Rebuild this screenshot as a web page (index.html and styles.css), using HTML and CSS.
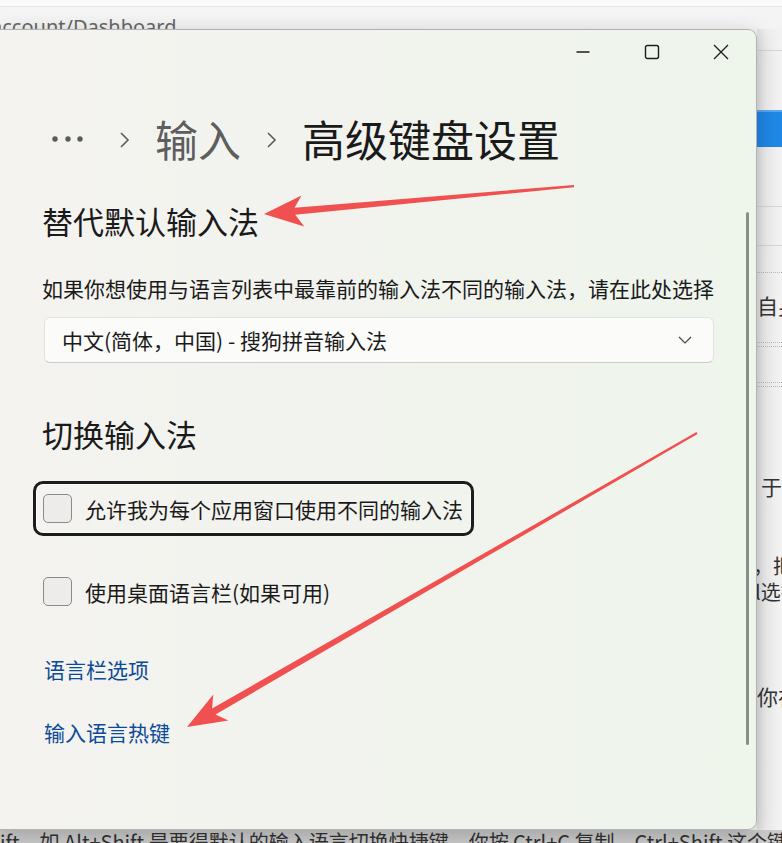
FILE: index.html
```html
<!DOCTYPE html>
<html lang="zh-CN">
<head>
<meta charset="utf-8">
<title>高级键盘设置</title>
<link rel="stylesheet" href="styles.css">
</head>
<body>
<div class="page">
  <div class="topstrip"><span class="addr">account/Dashboard</span></div>
  <div class="site">
    <div class="site-main"></div>
    <div class="site-side">
      <div class="rule r1"></div>
      <div class="bluebar"></div>
      <div class="rule r2"></div>
      <div class="rule r3"></div>
      <div class="dotrule d1"></div>
      <p class="stext t1">自身</p>
      <div class="dotrule d2"></div>
      <div class="dotrule d3"></div>
      <p class="stext t2">于是</p>
      <p class="stext t3">，把</p>
      <p class="stext t4">l选择</p>
      <p class="stext t5">你在</p>
    </div>
  </div>
  <p class="footline">Shift，如 Alt+Shift 是要得默认的输入语言切换快捷键，你按 Ctrl+C 复制，Ctrl+Shift 这个键涉及</p>
</div>

<div class="window">
  <div class="titlebar">
    <div class="capbtn">
      <svg width="16" height="16" viewBox="0 0 16 16"><line x1="1.5" y1="8" x2="14.5" y2="8" stroke="#1c1c1c" stroke-width="1.4"/></svg>
    </div>
    <div class="capbtn">
      <svg width="16" height="16" viewBox="0 0 16 16"><rect x="1.5" y="1.5" width="13" height="13" rx="2" fill="none" stroke="#1c1c1c" stroke-width="1.4"/></svg>
    </div>
    <div class="capbtn">
      <svg width="16" height="16" viewBox="0 0 16 16"><path d="M1 1 L15 15 M15 1 L1 15" stroke="#1c1c1c" stroke-width="1.3" fill="none"/></svg>
    </div>
  </div>

  <div class="content">
    <nav class="breadcrumb">
      <svg class="bc-dots" width="36" height="8" viewBox="0 0 36 8"><circle cx="5" cy="4" r="2.7" fill="#5b5b5b"/><circle cx="18" cy="4" r="2.7" fill="#5b5b5b"/><circle cx="30" cy="4" r="2.7" fill="#5b5b5b"/></svg>
      <svg class="bc-chev first" width="12" height="16" viewBox="0 0 12 16"><polyline points="3,1 10,8 3,15" fill="none" stroke="#5b5b5b" stroke-width="1.6"/></svg>
      <span class="bc-item">输入</span>
      <svg class="bc-chev" width="12" height="16" viewBox="0 0 12 16"><polyline points="3,1 10,8 3,15" fill="none" stroke="#5b5b5b" stroke-width="1.6"/></svg>
      <span class="bc-current">高级键盘设置</span>
    </nav>

    <h2 class="section-title first">替代默认输入法</h2>
    <p class="desc">如果你想使用与语言列表中最靠前的输入法不同的输入法，请在此处选择</p>
    <div class="select">
      <span class="select-text">中文(简体，中国) - 搜狗拼音输入法</span>
      <svg width="14" height="8" viewBox="0 0 14 8"><polyline points="1,1 7,7 13,1" fill="none" stroke="#444" stroke-width="1.2"/></svg>
    </div>

    <h2 class="section-title second">切换输入法</h2>
    <div class="check focused">
      <span class="box"></span>
      <span class="check-label">允许我为每个应用窗口使用不同的输入法</span>
    </div>
    <div class="check second">
      <span class="box"></span>
      <span class="check-label">使用桌面语言栏(如果可用)</span>
    </div>

    <a class="link first">语言栏选项</a>
    <a class="link second">输入语言热键</a>
  </div>
  <div class="scrollthumb"></div>
</div>

<svg class="annot" width="782" height="843" viewBox="0 0 782 843">
  <polygon points="264,214 301.5,195.6 294.6,207.7 573.9,185 574.1,187.2 295.2,214.7 304.2,226.4" fill="#f0504f"/>
  <polygon points="187,727 213.3,694.5 212.1,708.5 696.5,432.1 697.5,433.9 215.5,714.5 228.3,720.5" fill="#f0504f"/>
</svg>
</body>
</html>
```

FILE: styles.css
```css
* { box-sizing: border-box; }
html, body { margin: 0; padding: 0; }
body {
  width: 782px;
  height: 843px;
  overflow: hidden;
  position: relative;
  font-family: "Noto Sans CJK SC", "Noto Sans", sans-serif;
  background: #f2f2f2;
  color: #1b1b1b;
}

/* ---------- background web page ---------- */
.page { width: 782px; height: 843px; }
.topstrip {
  height: 29px;
  background: linear-gradient(#fafafa 0, #fafafa 6px, #e6e6e6 6px, #e6e6e6 7px, #f4f4f4 7px);
}
.addr {
  display: block;
  padding-top: 17px;
  margin-left: -9px;
  font-family: "Noto Sans", "Open Sans", sans-serif;
  font-size: 20px;
  line-height: 20px;
  color: #666;
  white-space: nowrap;
}
.site {
  height: 801px;
  display: grid;
  grid-template-columns: 757px 1fr;
}
.site-side {
  background: linear-gradient(90deg, #e2e2e2 0, #eeeeee 8px, #f3f3f3 100%);
  overflow: hidden;
}
.rule { height: 1px; background: #d6d6d6; }
.r1 { margin-top: 21px; }
.bluebar {
  margin-top: 59px;
  height: 37px;
  background: linear-gradient(#5aa6ef 0, #5aa6ef 2px, #1f88e6 2px);
}
.r2 { margin-top: 59px; }
.r3 { margin-top: 38px; }
.dotrule { border-top: 1px dotted #b8b8b8; }
.d1 { margin-top: 26px; }
.d2 { margin-top: 22px; height: 5px; border-bottom: 1px dotted #b8b8b8; }
.d3 { margin-top: 35px; height: 5px; border-bottom: 1px dotted #b8b8b8; }
.stext {
  margin: 0;
  font-size: 21px;
  line-height: 30px;
  color: #333;
  white-space: nowrap;
}
.t1 { margin-top: 17px; }
.t2 { margin-top: 84px; padding-left: 4px; }
.t3 { margin-top: 52px; line-height: 26px; margin-left: -4px; font-size: 20px; }
.t4 { line-height: 26px; margin-left: -2px; font-size: 20px; }
.t5 { margin-top: 76px; }
.footline {
  margin: 0;
  height: 13px;
  overflow: hidden;
  background: #cdcdcd;
  font-size: 20px;
  line-height: 24px;
  color: #333;
  white-space: nowrap;
  text-indent: -24px;
}

/* ---------- settings window ---------- */
.window {
  position: absolute;
  left: -1px;
  top: 29px;
  width: 758px;
  height: 801px;
  border: 1px solid #b2b2b2;
  border-radius: 0 9px 9px 0;
  background: linear-gradient(90deg, #f4f3ef 0%, #f2f3ee 45%, #eef5eb 100%);
  box-shadow: 0 6px 22px rgba(0, 0, 0, 0.22);
  overflow: hidden;
}
.titlebar {
  height: 44px;
  display: flex;
  justify-content: flex-end;
  padding-right: 1px;
}
.capbtn {
  width: 69px;
  height: 44px;
  display: flex;
  align-items: center;
  justify-content: center;
}
.content { padding-left: 42px; }

.breadcrumb {
  margin-top: 34px;
  height: 60px;
  display: flex;
  align-items: center;
  font-size: 43px;
  line-height: 60px;
  white-space: nowrap;
}
.bc-dots { margin-left: 8px; margin-top: 2px; }
.bc-chev { margin-top: 4px; margin-left: 24px; }
.bc-chev.first { margin-left: 32px; }
.bc-item { margin-left: 25px; color: #5e5e5e; }
.bc-current { margin-left: 25px; color: #1a1a1a; }

.section-title {
  margin: 0;
  font-size: 31px;
  line-height: 40px;
  font-weight: 400;
  color: #1a1a1a;
}
.section-title.first { margin-top: 33px; }
.section-title.second { margin-top: 51px; }

.desc {
  margin: 32px 0 0;
  font-size: 21px;
  line-height: 30px;
  color: #1a1a1a;
  white-space: nowrap;
}

.select {
  margin-top: 14px;
  margin-left: 2px;
  width: 670px;
  height: 46px;
  border: 1px solid #e2e2e2;
  border-bottom-color: #cbcbcb;
  border-radius: 6px;
  background: #fbfbfa;
  display: flex;
  align-items: center;
  justify-content: space-between;
  padding: 0 21px 0 17px;
  font-size: 21px;
  line-height: 30px;
  color: #1a1a1a;
}

.check {
  display: flex;
  width: max-content;
  align-items: center;
  height: 55px;
  margin-left: -9px;
  padding: 0 8px 0 7px;
  border: 3px solid transparent;
  border-radius: 10px;
  font-size: 21px;
  line-height: 30px;
  color: #1a1a1a;
}
.check.focused {
  margin-top: 27px;
  border-color: #1c1c1c;
  box-shadow: inset 0 0 0 1px rgba(255, 255, 255, 0.9);
}
.check.second { margin-top: 28px; }
.box {
  width: 29px;
  height: 29px;
  border: 1px solid #8a8a8a;
  border-radius: 5px;
  background: #edecea;
  flex: none;
}
.check-label { margin-left: 13px; white-space: nowrap; }

.link {
  display: block;
  margin-left: 2px;
  font-size: 21px;
  line-height: 30px;
  color: #0c4b98;
  text-decoration: none;
}
.link.first { margin-top: 35px; }
.link.second { margin-top: 33px; }

.scrollthumb {
  position: absolute;
  right: 7px;
  top: 182px;
  width: 3px;
  height: 533px;
  border-radius: 2px;
  background: #8c8c8a;
}

/* ---------- annotation arrows ---------- */
.annot {
  position: absolute;
  left: 0;
  top: 0;
  pointer-events: none;
}
```
